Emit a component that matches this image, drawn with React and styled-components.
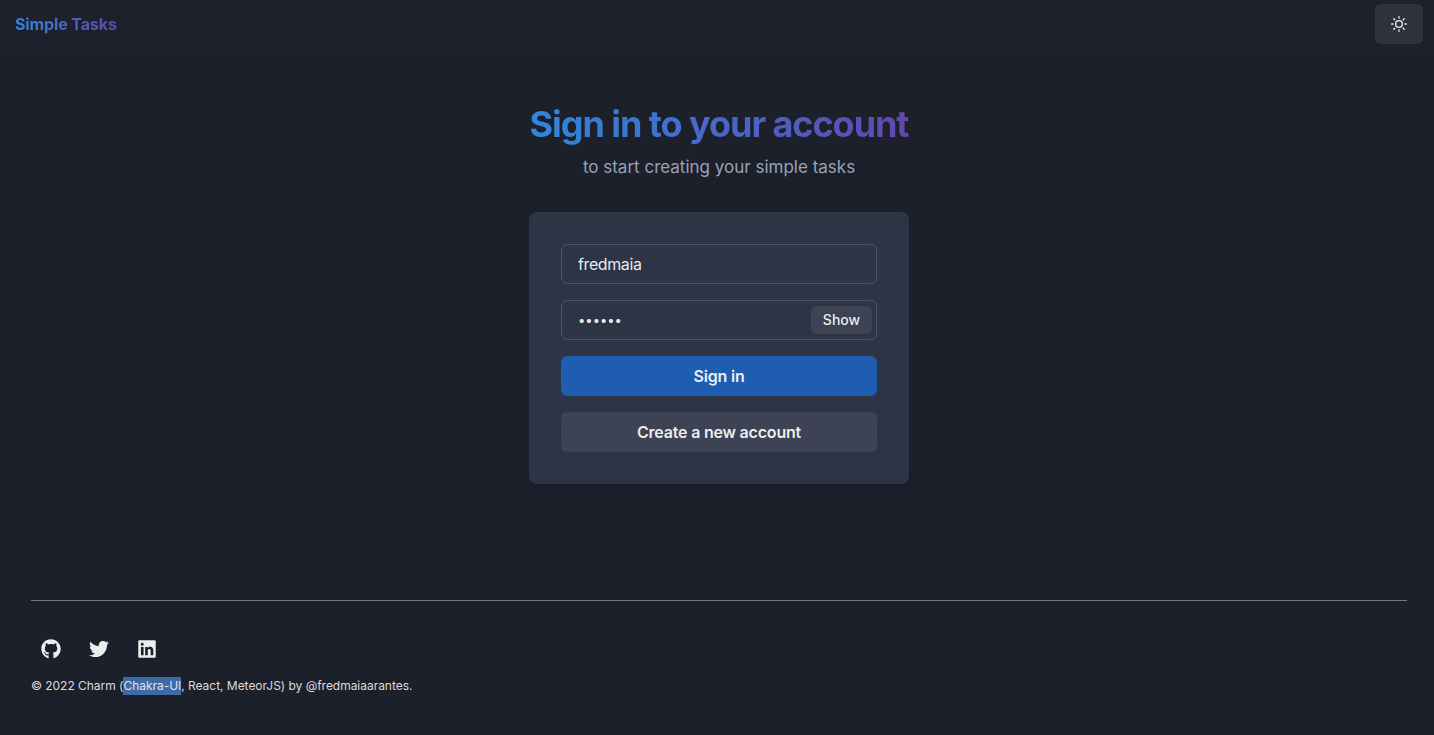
import React from 'react';
import styled, { createGlobalStyle } from 'styled-components';
import { FaGithub, FaTwitter, FaLinkedin } from 'react-icons/fa';

const GlobalStyle = createGlobalStyle`
  html, body {
    margin: 0;
    height: 100%;
    background: #1c202b;
  }
  body {
    font-family: Inter, "Liberation Sans", sans-serif;
    color: rgba(255, 255, 255, 0.92);
    line-height: 1.5;
  }
  * {
    box-sizing: border-box;
  }
`;

const Page = styled.div`
  height: 735px;
  display: flex;
  flex-direction: column;
  overflow: hidden;
`;

const Navbar = styled.header`
  height: 52px;
  flex: none;
  display: flex;
  justify-content: space-between;
  align-items: flex-start;
  padding: 4px 11px 0 15px;
  background: #1d212c;
`;

const Brand = styled.span`
  margin-top: 8px;
  font-size: 16px;
  line-height: 24px;
  font-weight: 700;
  letter-spacing: -0.12px;
  background: linear-gradient(to left, #6247ab, #2f88dd);
  background-clip: text;
  -webkit-background-clip: text;
  color: transparent;
`;

const ThemeToggle = styled.button`
  width: 48px;
  height: 40px;
  display: flex;
  align-items: center;
  justify-content: center;
  border: 0;
  border-radius: 6px;
  background: rgba(255, 255, 255, 0.08);
  color: rgba(255, 255, 255, 0.92);
  padding: 0;
`;

const Main = styled.main`
  flex: 1;
  display: flex;
  flex-direction: column;
  align-items: center;
  padding: 48px 27px 0 31px;
`;

const Title = styled.h1`
  margin: 0;
  font-size: 36px;
  line-height: 48px;
  font-weight: 700;
  letter-spacing: -1.05px;
  background: linear-gradient(to left, #6247ab, #2f88dd);
  background-clip: text;
  -webkit-background-clip: text;
  color: transparent;
`;

const Subtitle = styled.p`
  margin: 6px 0 0;
  font-size: 17px;
  line-height: 27px;
  color: #98a1b8;
`;

const Card = styled.form`
  width: 380px;
  margin-top: 31px;
  padding: 32px;
  display: flex;
  flex-direction: column;
  gap: 16px;
  background: #2d3446;
  border-radius: 8px;
  box-shadow: 0 4px 8px -2px rgba(0, 0, 0, 0.08);
`;

const Field = styled.div`
  position: relative;
  height: 40px;
`;

const TextInput = styled.input`
  width: 100%;
  height: 40px;
  padding: 0 ${(p) => (p.$withAddon ? '72px' : '16px')} 0 16px;
  font: inherit;
  font-size: ${(p) => (p.$withAddon ? '13px' : '16px')};
  letter-spacing: ${(p) => (p.$withAddon ? '0' : '-0.4px')};
  color: rgba(255, 255, 255, 0.92);
  background: transparent;
  border: 1px solid rgba(255, 255, 255, 0.16);
  border-radius: 6px;
  outline: none;
`;

const ShowButton = styled.button`
  position: absolute;
  top: 6px;
  right: 5px;
  width: 61px;
  height: 28px;
  padding: 0 0 1px;
  font: inherit;
  font-size: 14px;
  font-weight: 500;
  color: rgba(255, 255, 255, 0.92);
  background: rgba(255, 255, 255, 0.08);
  border: 0;
  border-radius: 6px;
`;

const ActionButton = styled.button`
  height: 40px;
  padding: 0 16px;
  font: inherit;
  font-size: 16px;
  font-weight: 600;
  letter-spacing: -0.2px;
  color: rgba(255, 255, 255, 0.92);
  background: ${(p) => (p.$primary ? '#1f5db0' : 'rgba(255, 255, 255, 0.08)')};
  border: 0;
  border-radius: 6px;
`;

const Footer = styled.footer`
  flex: none;
  padding: 0 27px 40px 31px;
`;

const Divider = styled.hr`
  margin: 0 0 24px;
  border: 0;
  border-top: 1px solid #71788a;
`;

const Socials = styled.div`
  display: flex;
  gap: 8px;
`;

const SocialLink = styled.a`
  width: 40px;
  height: 48px;
  display: flex;
  align-items: center;
  justify-content: center;
  color: rgba(255, 255, 255, 0.92);
`;

const Copyright = styled.p`
  margin: 4px 0 0;
  font-size: 12px;
  line-height: 18px;
  letter-spacing: -0.03px;
  color: rgba(255, 255, 255, 0.85);
`;

const Selected = styled.span`
  display: inline-block;
  background: #3e6ba5;
`;

const SunIcon = () => (
  <svg width="16" height="16" viewBox="0 0 24 24" fill="none" stroke="currentColor" strokeWidth="2" strokeLinecap="round" strokeLinejoin="round">
    <circle cx="12" cy="12" r="5" />
    <path d="M12 1v2" />
    <path d="M12 21v2" />
    <path d="M4.22 4.22l1.42 1.42" />
    <path d="M18.36 18.36l1.42 1.42" />
    <path d="M1 12h2" />
    <path d="M21 12h2" />
    <path d="M4.22 19.78l1.42-1.42" />
    <path d="M18.36 5.64l1.42-1.42" />
  </svg>
);

const App = () => (
  <Page>
    <GlobalStyle />
    <Navbar>
      <Brand>Simple Tasks</Brand>
      <ThemeToggle type="button" aria-label="Toggle color mode">
        <SunIcon />
      </ThemeToggle>
    </Navbar>
    <Main>
      <Title>Sign in to your account</Title>
      <Subtitle>to start creating your simple tasks</Subtitle>
      <Card onSubmit={(e) => e.preventDefault()}>
        <Field>
          <TextInput type="text" defaultValue="fredmaia" />
        </Field>
        <Field>
          <TextInput $withAddon type="password" defaultValue="123456" />
          <ShowButton type="button">Show</ShowButton>
        </Field>
        <ActionButton $primary type="submit">Sign in</ActionButton>
        <ActionButton type="button">Create a new account</ActionButton>
      </Card>
    </Main>
    <Footer>
      <Divider />
      <Socials>
        <SocialLink href="#" aria-label="Github"><FaGithub size={20} /></SocialLink>
        <SocialLink href="#" aria-label="Twitter"><FaTwitter size={20} /></SocialLink>
        <SocialLink href="#" aria-label="LinkedIn"><FaLinkedin size={20} /></SocialLink>
      </Socials>
      <Copyright>
        © 2022 Charm (<Selected>Chakra-UI</Selected>, React, MeteorJS) by @fredmaiaarantes.
      </Copyright>
    </Footer>
  </Page>
);

export default App;
